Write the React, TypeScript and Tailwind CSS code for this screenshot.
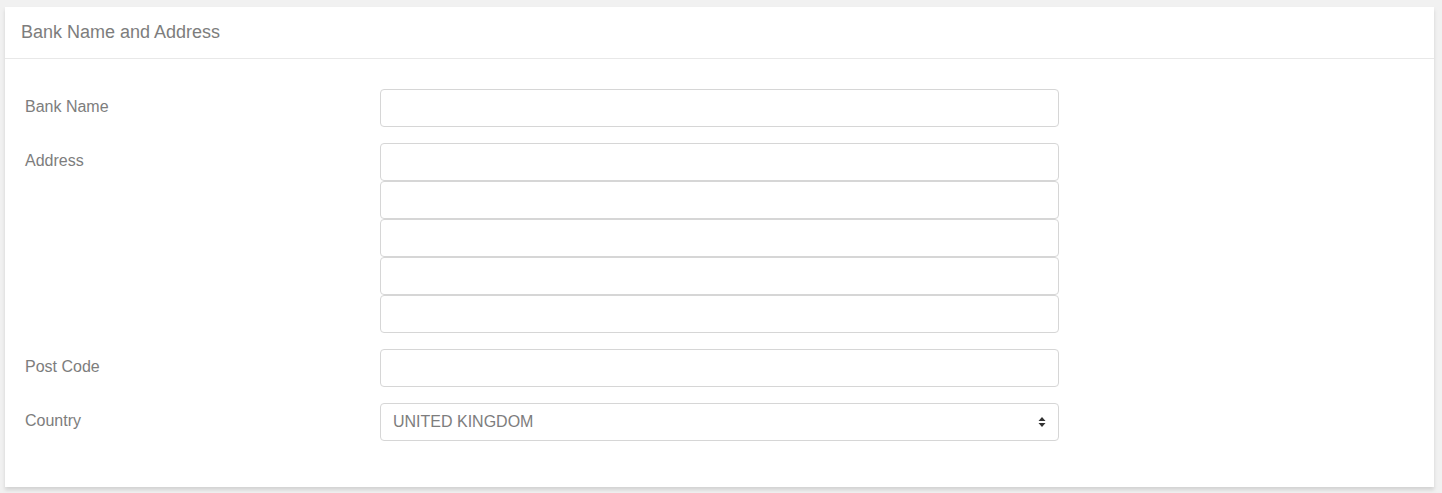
import React from 'react';

const font = "font-['Liberation_Sans',Arial,sans-serif]";

const inputCls =
  'block w-[679px] h-[38px] bg-white border border-[#d6d6d6] rounded-[4px] px-3 text-[16px] text-[#7d7d7d] outline-none';

const Row: React.FC<{ label: string; children: React.ReactNode }> = ({ label, children }) => (
  <div className="flex">
    <label className="w-[355px] shrink-0 pt-[7px] text-[16px] leading-[22px] text-[#7d7d7d]">{label}</label>
    <div className="flex flex-col">{children}</div>
  </div>
);

export default function App() {
  return (
    <div className={`${font} bg-[#f1f1f1] w-full h-[493px] pt-[7px] pl-[5px] pr-[8px]`}>
      <div className="bg-white h-[480px] shadow-[0_3px_4px_rgba(0,0,0,0.13)]">
        {/* Header */}
        <div className="h-[52px] border-b border-[#e8e8e8] pl-4 flex items-center">
          <h2 className="text-[18px] text-[#7d7d7d] leading-none pb-[2px]">Bank Name and Address</h2>
        </div>

        {/* Form */}
        <div className="pt-[30px] pl-5 flex flex-col gap-4">
          <Row label="Bank Name">
            <input className={inputCls} />
          </Row>
          <Row label="Address">
            <input className={inputCls} />
            <input className={inputCls} />
            <input className={inputCls} />
            <input className={inputCls} />
            <input className={inputCls} />
          </Row>
          <Row label="Post Code">
            <input className={inputCls} />
          </Row>
          <Row label="Country">
            <div className={`${inputCls} flex items-center justify-between pr-[12px]`}>
              <span className="text-[16px] text-[#7d7d7d]">UNITED KINGDOM</span>
              <svg width="8" height="12" viewBox="0 0 8 12" className="text-[#333]">
                <path d="M4 1 L7.5 5 H0.5 Z" fill="currentColor" />
                <path d="M4 11 L7.5 7 H0.5 Z" fill="currentColor" />
              </svg>
            </div>
          </Row>
        </div>
      </div>
    </div>
  );
}
